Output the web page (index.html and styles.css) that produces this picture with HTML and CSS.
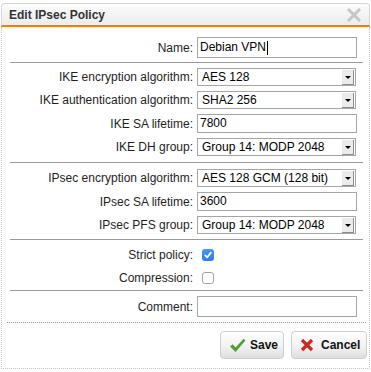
FILE: index.html
```html
<!DOCTYPE html>
<html>
<head>
<meta charset="utf-8">
<link rel="stylesheet" href="styles.css">
</head>
<body>
<div class="dialog">
  <div class="titlebar">
    <span class="title">Edit IPsec Policy</span>
    <svg class="close" width="14" height="14" viewBox="0 0 14 14"><path d="M2 2 L12 12 M12 2 L2 12" stroke="#c6c6c6" stroke-width="3" stroke-linecap="square"/></svg>
  </div>
  <div class="content">
    <div class="section s-name">
      <span class="lbl">Name:</span>
      <div class="field tall">Debian VPN<span class="caret"></span></div>
    </div>
    <div class="section s-ike">
      <span class="lbl">IKE encryption algorithm:</span>
      <div class="select"><span class="value">AES 128</span><span class="arrow"></span></div>
      <span class="lbl">IKE authentication algorithm:</span>
      <div class="select"><span class="value">SHA2 256</span><span class="arrow"></span></div>
      <span class="lbl">IKE SA lifetime:</span>
      <div class="field">7800</div>
      <span class="lbl">IKE DH group:</span>
      <div class="select"><span class="value">Group 14: MODP 2048</span><span class="arrow"></span></div>
    </div>
    <div class="section s-ipsec">
      <span class="lbl">IPsec encryption algorithm:</span>
      <div class="select"><span class="value">AES 128 GCM (128 bit)</span><span class="arrow"></span></div>
      <span class="lbl">IPsec SA lifetime:</span>
      <div class="field">3600</div>
      <span class="lbl">IPsec PFS group:</span>
      <div class="select"><span class="value">Group 14: MODP 2048</span><span class="arrow"></span></div>
    </div>
    <div class="section s-check">
      <span class="lbl">Strict policy:</span>
      <div><span class="checkbox checked"><svg width="12" height="12" viewBox="0 0 12 12"><path d="M3.2 6.3 L5.2 8.3 L8.9 3.6" fill="none" stroke="#fff" stroke-width="1.7" stroke-linecap="round" stroke-linejoin="round"/></svg></span></div>
      <span class="lbl">Compression:</span>
      <div><span class="checkbox"></span></div>
    </div>
    <div class="section s-comment">
      <span class="lbl">Comment:</span>
      <div class="field tall"></div>
    </div>
    <div class="footer">
      <button class="btn save">
        <svg width="17" height="15" viewBox="0 0 17 15"><path d="M1 8.5 L3.6 6.2 L6.6 9.6 L14.6 0.8 L16.4 2.6 L6.6 14 Z" fill="#4f9f33"/></svg>
        <span>Save</span>
      </button>
      <button class="btn cancel">
        <svg width="14" height="14" viewBox="0 0 14 14"><path d="M2 2 L12 12 M12 2 L2 12" stroke="#cc2a1e" stroke-width="3.2" stroke-linecap="butt"/></svg>
        <span>Cancel</span>
      </button>
    </div>
  </div>
</div>
</body>
</html>
```

FILE: styles.css
```css
html, body {
  margin: 0;
  padding: 0;
  background: #fff;
}
body {
  font-family: "Liberation Sans", Arial, Helvetica, sans-serif;
  font-size: 12px;
  color: #1e1e1e;
}
.dialog {
  width: 369px;
  margin: 3px 0 0 1px;
}
.titlebar {
  box-sizing: border-box;
  height: 24px;
  border: 1px solid #d6d6d6;
  border-bottom: 2px solid #ee7f00;
  border-radius: 4px 4px 0 0;
  background: linear-gradient(#fcfcfc, #ececec);
  display: flex;
  align-items: center;
  justify-content: space-between;
  padding: 0 8px 0 7px;
}
.title {
  font-weight: bold;
  font-size: 12px;
  color: #333;
}
.close {
  display: block;
  margin-top: 1px;
}
.content {
  border-left: 1px dotted #c4c4c4;
  border-right: 1px dotted #c4c4c4;
  border-bottom: 1px dotted #c4c4c4;
}
.section {
  display: grid;
  grid-template-columns: 1fr 160px;
  column-gap: 4px;
  row-gap: 5px;
  align-items: center;
  margin: 0 6px 0 8px;
  padding-right: 6px;
  border-bottom: 1px solid #9a9a9a;
}
.s-name { padding-top: 10px; padding-bottom: 4px; }
.s-ike { padding-top: 5px; padding-bottom: 6px; }
.s-ipsec { padding-top: 6px; padding-bottom: 5px; }
.s-check { padding-top: 3px; padding-bottom: 1px; row-gap: 0; grid-auto-rows: 23px; }
.s-comment { padding-top: 5px; padding-bottom: 5px; border-bottom: none; }
.lbl {
  text-align: right;
  white-space: nowrap;
  color: #1e1e1e;
}
.field {
  box-sizing: border-box;
  height: 19px;
  border: 1px solid #a6a6a6;
  padding: 0 2px;
  line-height: 17px;
  color: #000;
  display: flex;
  align-items: center;
}
.field.tall {
  height: 21px;
}
.caret {
  display: inline-block;
  width: 1px;
  height: 14px;
  background: #000;
  margin-left: 1px;
}
.select {
  box-sizing: border-box;
  width: 159px;
  height: 18px;
  border: 1px solid #a6a6a6;
  display: flex;
  align-items: stretch;
  background: #fff;
}
.value {
  flex: 1;
  padding-left: 4px;
  line-height: 16px;
  color: #000;
  white-space: nowrap;
}
.arrow {
  width: 11px;
  margin: 1px 1px 0 0;
  background: #ebebeb;
  border-right: 1px solid #8c8c8c;
  border-bottom: 1px solid #8c8c8c;
  display: flex;
  align-items: center;
  justify-content: center;
}
.arrow::after {
  content: "";
  border-left: 3px solid transparent;
  border-right: 3px solid transparent;
  border-top: 3px solid #000;
  margin-top: 1px;
}
.checkbox {
  box-sizing: border-box;
  display: block;
  width: 12px;
  height: 12px;
  margin-left: 5px;
  border: 1px solid #a3a3a3;
  border-radius: 3px;
  background: #fff;
}
.checkbox.checked {
  border: none;
  background: linear-gradient(#4a95f7, #2f7bf2);
}
.checkbox svg {
  display: block;
}
.footer {
  border-top: 1px dotted #9a9a9a;
  margin: 0 3px 0 5px;
  padding: 8px 0 9px;
  display: flex;
  justify-content: flex-end;
  gap: 8px;
}
.btn {
  box-sizing: border-box;
  height: 28px;
  border: 1px solid #cfcfcf;
  border-radius: 4px;
  background: linear-gradient(#ffffff, #f0f0f0 60%, #dedede);
  display: flex;
  align-items: center;
  font-family: "Liberation Sans", Arial, sans-serif;
  font-weight: bold;
  font-size: 12px;
  color: #111;
  padding: 0;
  margin-right: -1px;
}
.save {
  width: 64px;
  padding-left: 8px;
  gap: 4px;
}
.cancel {
  width: 76px;
  padding-left: 8px;
  gap: 7px;
}
.btn svg {
  display: block;
}
```
